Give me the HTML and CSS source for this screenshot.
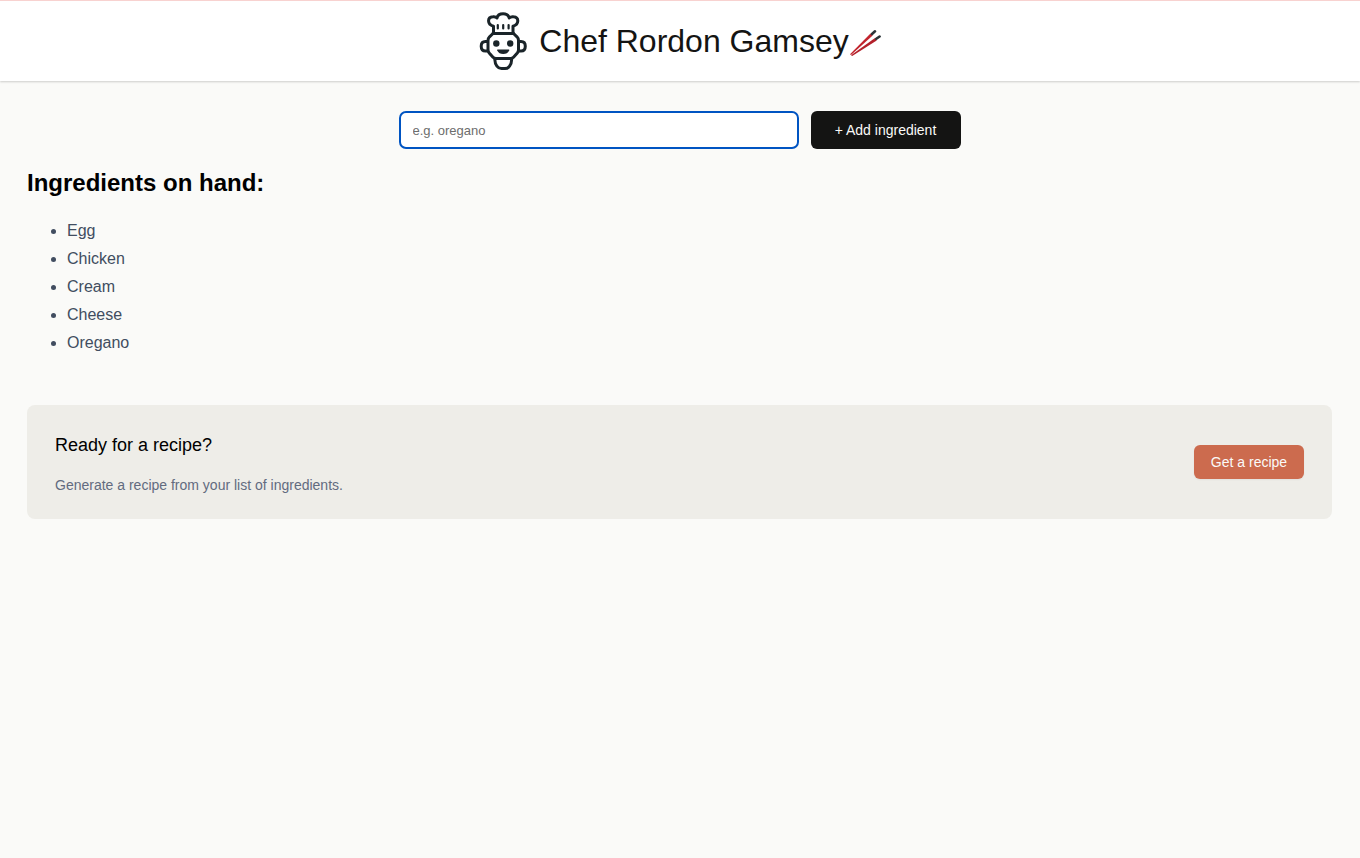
FILE: index.html
```html
<!DOCTYPE html>
<html lang="en">
<head>
<meta charset="utf-8">
<meta name="viewport" content="width=device-width, initial-scale=1">
<title>Chef Rordon Gamsey</title>
<link rel="stylesheet" href="styles.css">
</head>
<body>
<header class="header">
  <svg class="header-logo" viewBox="0 0 48 60" fill="none" stroke="#1a2429" stroke-width="3" stroke-linejoin="round" stroke-linecap="round" aria-hidden="true">
    <path d="M14.500 22V15.300C8 13.500 8 6.300 14 5.800C15.500 5.600 17 6 18 7C19.200 1.300 29 1.300 30.200 7C31.300 6 33 5.600 34.500 5.800C40.300 6.300 40.300 13.500 34 15.300V22"/>
    <path d="M14 22.500H34.500" stroke-width="3.200"/>
    <path d="M18.800 14V17.500M24.200 14V17.500M29.600 14V17.500" stroke-width="2.200"/>
    <path d="M14 22.500L10.500 25.800Q9 27.300 9 29.500V38.500Q9 40.500 10.200 42L14 46.200Q15.200 47.500 17 47.500H31.500Q33.300 47.500 34.500 46.200L38.300 42Q39.500 40.500 39.500 38.500V29.500Q39.500 27.300 38 25.800L34.500 22.500"/>
    <path d="M8.500 30.500H6.500C3.500 30.500 2.200 32.500 2.200 35.200C2.200 38 3.500 40 6.500 40H8.500M40 30.500H42C45 30.500 46.300 32.500 46.300 35.200C46.300 38 45 40 42 40H40"/>
    <path d="M15.800 48.500C16 54 19 57.600 22.500 57.600H26C29.500 57.600 32.500 54 32.700 48.500"/>
    <circle cx="17.300" cy="32.500" r="3.200" fill="#1a2429" stroke="none"/>
    <circle cx="31.200" cy="32.500" r="3.200" fill="#1a2429" stroke="none"/>
    <path d="M18.500 38.500H30Q30.500 38.500 30.200 39.500Q28.500 43 24.200 43Q20 43 18.200 39.500Q18 38.500 18.500 38.500Z" fill="#1a2429" stroke="none"/>
  </svg>
  <h1 class="header-title">Chef Rordon Gamsey</h1>
  <svg class="header-chopsticks" viewBox="0 0 32 30" aria-hidden="true">
    <path d="M1 28.200L21.500 7.500L23.700 9.500L2 29Z" fill="#c2242d"/>
    <path d="M2 29.200L26 12L27.700 14.400L3.200 30Z" fill="#b3202a"/>
    <path d="M23 8L26 5.300M27.300 12.800L30.600 10.500" stroke="#2b3337" stroke-width="2.600" stroke-linecap="round"/>
  </svg>
</header>
<main class="main">
  <form class="ingredient-form">
    <input class="ingredient-input" type="text" name="ingredient" placeholder="e.g. oregano" aria-label="Add ingredient">
    <button class="ingredient-button" type="button">+ Add ingredient</button>
  </form>
  <section>
    <h2 class="ingredients-title">Ingredients on hand:</h2>
    <ul class="ingredients-list">
      <li>Egg</li>
      <li>Chicken</li>
      <li>Cream</li>
      <li>Cheese</li>
      <li>Oregano</li>
    </ul>
    <div class="recipe-card">
      <div class="recipe-text">
        <h3 class="recipe-title">Ready for a recipe?</h3>
        <p class="recipe-note">Generate a recipe from your list of ingredients.</p>
      </div>
      <button class="recipe-button" type="button">Get a recipe</button>
    </div>
  </section>
</main>
</body>
</html>
```
FILE: styles.css
```css
* {
  box-sizing: border-box;
}

body {
  margin: 0;
  min-height: 100vh;
  background: #fafaf8;
  color: #000;
  font-family: "Liberation Sans", Arial, sans-serif;
}

.header {
  display: flex;
  align-items: center;
  justify-content: center;
  height: 81px;
  background: #fff;
  border-top: 1px solid #f8d2d0;
  box-shadow: 0 1px 2px rgba(0, 0, 0, 0.18);
}

.header-logo {
  width: 48px;
  height: 60px;
  margin-right: 12px;
}

.header-title {
  margin: 0;
  color: #141413;
  font-size: 32px;
  font-weight: 400;
}

.header-chopsticks {
  width: 32px;
  height: 30px;
}

.main {
  padding: 30px 28px 12px 27px;
}

.ingredient-form {
  display: flex;
  justify-content: center;
  gap: 12px;
  height: 38px;
}

.ingredient-input {
  width: 400px;
  min-width: 0;
  padding: 0 12px;
  border: 2px solid #0054c2;
  border-radius: 7px;
  outline: none;
  background: #fff;
  color: #141413;
  font-family: inherit;
  font-size: 13px;
}

.ingredient-input::placeholder {
  color: #6d6d6d;
}

.ingredient-button {
  width: 150px;
  padding: 0;
  border: 0;
  border-radius: 6px;
  background: #141413;
  color: #fafaf8;
  font-family: inherit;
  font-size: 14px;
}

.ingredients-title {
  margin: 20px 0;
  font-size: 24px;
  line-height: 28px;
}

.ingredients-list {
  margin: 0 0 48px;
  padding-left: 40px;
  color: #414d60;
  line-height: 28px;
}

.recipe-card {
  display: flex;
  align-items: center;
  justify-content: space-between;
  padding: 25px 28px;
  border-radius: 8px;
  background: #eeede8;
}

.recipe-title {
  margin: 0 0 16px;
  font-size: 18px;
  font-weight: 400;
  line-height: 30px;
}

.recipe-note {
  margin: 0;
  color: #626b7f;
  font-size: 14px;
  line-height: 18px;
}

.recipe-button {
  width: 110px;
  height: 34px;
  padding: 0;
  border: 0;
  border-radius: 6px;
  background: #cc6b4e;
  box-shadow: 0 1px 2px rgba(16, 24, 40, 0.05);
  color: #fafaf8;
  font-family: inherit;
  font-size: 14px;
}
```
